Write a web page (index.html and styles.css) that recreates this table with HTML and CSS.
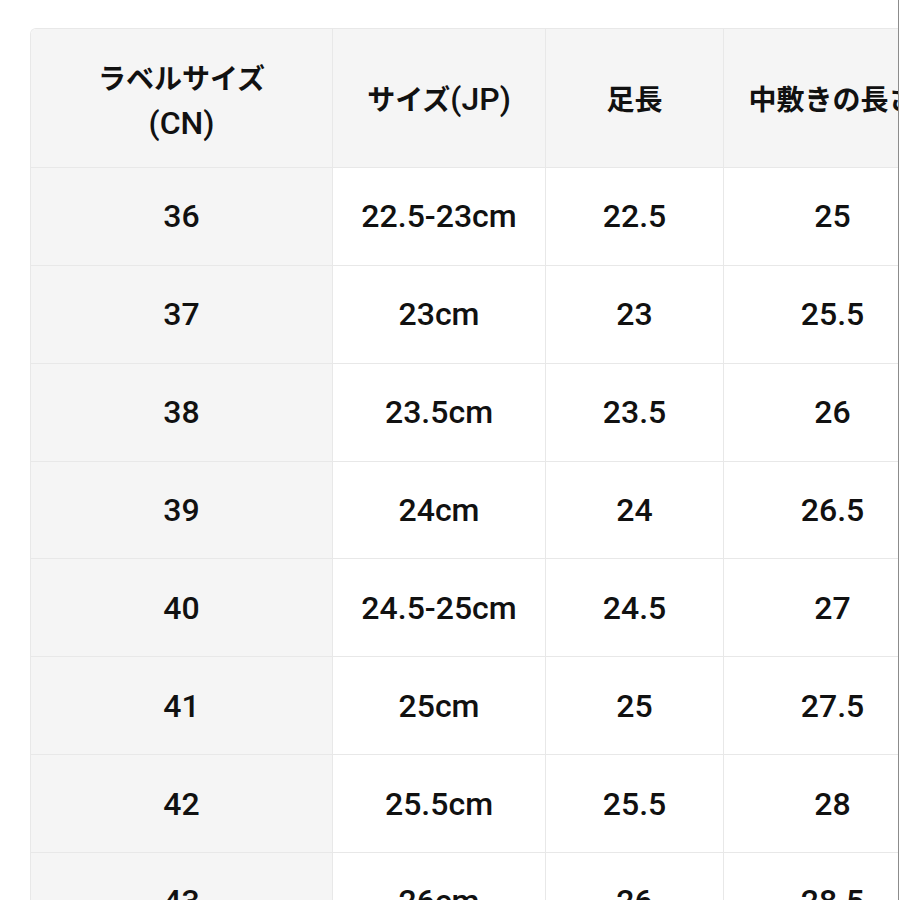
FILE: index.html
```html
<!DOCTYPE html>
<html lang="ja">
<head>
<meta charset="utf-8">
<title>サイズ表</title>
<link rel="stylesheet" href="styles.css">
</head>
<body>
<div class="frame">
  <div class="grid">
    <div class="cell head first"><span class="jp">ラベルサイズ</span><br>(CN)</div>
    <div class="cell head"><span class="jp">サイズ</span>(JP)</div>
    <div class="cell head"><span class="jp">足長</span></div>
    <div class="cell head"><span class="jp">中敷きの長さ</span></div>

    <div class="cell first">36</div><div class="cell">22.5-23cm</div><div class="cell">22.5</div><div class="cell">25</div>
    <div class="cell first">37</div><div class="cell">23cm</div><div class="cell">23</div><div class="cell">25.5</div>
    <div class="cell first">38</div><div class="cell">23.5cm</div><div class="cell">23.5</div><div class="cell">26</div>
    <div class="cell first">39</div><div class="cell">24cm</div><div class="cell">24</div><div class="cell">26.5</div>
    <div class="cell first">40</div><div class="cell">24.5-25cm</div><div class="cell">24.5</div><div class="cell">27</div>
    <div class="cell first">41</div><div class="cell">25cm</div><div class="cell">25</div><div class="cell">27.5</div>
    <div class="cell first">42</div><div class="cell">25.5cm</div><div class="cell">25.5</div><div class="cell">28</div>
    <div class="cell first">43</div><div class="cell">26cm</div><div class="cell">26</div><div class="cell">28.5</div>
  </div>
</div>
</body>
</html>
```
FILE: styles.css
```css
html, body {
  margin: 0;
  padding: 0;
  background: #ffffff;
  overflow: hidden;
}
.frame {
  width: 868px;
  height: 872px;
  padding: 28px 0 0 30px;
  border-right: 1px solid #8c8c8c;
  overflow: hidden;
  background: #fff;
}
.grid {
  display: grid;
  grid-template-columns: 302px 213px 178px 218px;
  grid-template-rows: 139px;
  grid-auto-rows: 97.86px;
  width: max-content;
  border-top: 1px solid #e8e8e8;
  border-left: 1px solid #e8e8e8;
  border-top-left-radius: 6px;
  overflow: hidden;
  font-family: Roboto, "Noto Sans CJK JP", sans-serif;
  font-weight: 500;
  font-size: 32px;
  color: #111111;
}
.cell {
  box-sizing: border-box;
  display: flex;
  flex-direction: column;
  align-items: center;
  justify-content: center;
  text-align: center;
  border-right: 1px solid #e8e8e8;
  border-bottom: 1px solid #e8e8e8;
  background: #ffffff;
  line-height: 1;
}
.cell.head {
  display: block;
  line-height: 139px;
  background: #f5f5f5;
  white-space: nowrap;
}
.cell.head.first {
  line-height: 45px;
  padding-top: 26px;
}
.cell.first {
  background: #f5f5f5;
}
.jp {
  font-family: "Noto Sans CJK JP", sans-serif;
  font-size: 28px;
  font-weight: 700;
}
```
